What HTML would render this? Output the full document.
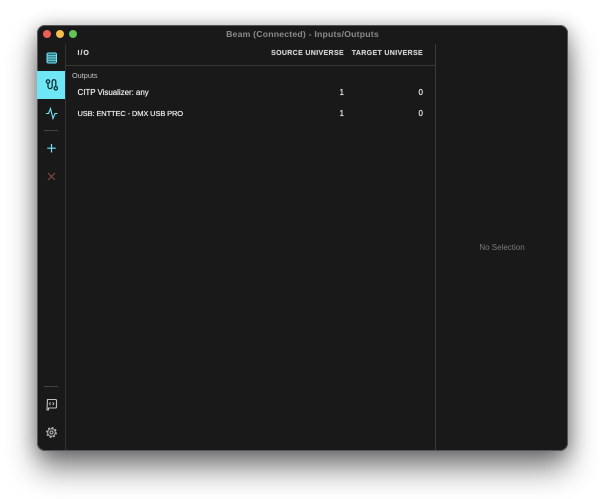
<!DOCTYPE html>
<html><head><meta charset="utf-8">
<style>
html,body{margin:0;padding:0;background:#fff;width:605px;height:499px;overflow:hidden}
*{box-sizing:border-box}
body{font-family:"Liberation Sans",sans-serif;position:relative}
#win{position:absolute;left:37px;top:25px;width:531px;height:426px;background:#191919;border-radius:8px;box-shadow:0 0 0 1px #55555a inset,0 18px 30px rgba(0,0,0,.48),0 2px 18px rgba(0,0,0,.3);}
.a{position:absolute}
.t{position:absolute;white-space:nowrap;line-height:12px;text-shadow:0 0 .5px currentColor}
.dot{position:absolute;top:5px;width:8px;height:8px;border-radius:50%}
</style></head><body>
<div id="win">
<div class="dot" style="left:6px;background:#ec5f56"></div>
<div class="dot" style="left:19px;background:#f4bd4f"></div>
<div class="dot" style="left:32px;background:#61c454"></div>
<div class="t" style="left:0;width:531px;text-align:center;top:3px;font-size:8.700px;font-weight:bold;color:#8a8a8a;letter-spacing:.2px;text-shadow:none">Beam (Connected) - Inputs/Outputs</div>

<div class="a" style="left:28px;top:19px;width:1px;height:406px;background:#333"></div>
<div class="a" style="left:398px;top:19px;width:1px;height:406px;background:#3a3a3a"></div>
<div class="a" style="left:29px;top:40px;width:369px;height:1px;background:#383838"></div>

<div class="a" style="left:0;top:46px;width:28px;height:28px;background:#6fe6f6"></div>
<div class="a" style="left:7px;top:105px;width:14px;height:1px;background:#444"></div>
<div class="a" style="left:7px;top:361px;width:14px;height:1px;background:#444"></div>

<svg class="a" style="left:0;top:0" width="29" height="426" fill="none">
<g stroke="#6fe6f6" stroke-width="1">
<rect x="10" y="28" width="9.500" height="10" rx="1.500" fill="#2f6d76"/>
<path d="M10 30.800h9.500M10 33h9.500M10 35.200h9.500"/>
</g>
<g stroke="#123338" stroke-width="1.300">
<circle cx="11" cy="56.500" r="1.700"/>
<path d="M11 58.200v3.300a2.100 2.100 0 0 0 4.200 0v-5a1.800 1.800 0 0 1 3.600 0v5.500"/>
<circle cx="18.800" cy="63.300" r="1.700"/>
</g>
<path d="M9 88.500h2.500l2-5 2.500 10 2-5h2.500" stroke="#6fe6f6" stroke-width="1.100"/>
<path d="M14.500 119v8.500M10.200 123.200h8.600" stroke="#6fe6f6" stroke-width="1.200"/>
<path d="M11 148l7 7M18 148l-7 7" stroke="#8a4a4a" stroke-width="1"/>
<path d="M10.500 374.500h8a1 1 0 0 1 1 1v6.500a1 1 0 0 1-1 1h-7v1.800h-1.500z" stroke="#c0c0c0" stroke-width="1.100"/>
<path d="M13.500 377.300l-1.100 1.400 1.100 1.400M15.700 377.300l1.100 1.400-1.100 1.400" stroke="#c0c0c0" stroke-width=".9"/>
<circle cx="14.500" cy="407.500" r="3.800" stroke="#b5b5b5" stroke-width="1"/>
<circle cx="14.500" cy="407.500" r="4.800" stroke="#b5b5b5" stroke-width="1.300" stroke-dasharray="1.900 1.870"/>
<circle cx="14.500" cy="407.500" r="1.500" stroke="#b5b5b5" stroke-width="1"/>
</svg>

<div class="t" style="left:40.500px;top:23px;font-size:7px;font-weight:bold;color:#ddd;letter-spacing:1px">I/O</div>
<div class="t" style="right:224px;top:23px;font-size:7px;font-weight:bold;color:#ccc;letter-spacing:.35px">SOURCE UNIVERSE</div>
<div class="t" style="right:145px;top:23px;font-size:7px;font-weight:bold;color:#ccc;letter-spacing:.35px">TARGET UNIVERSE</div>

<div class="t" style="left:35px;top:44.500px;font-size:7.300px;color:#c4c4c4;text-shadow:none">Outputs</div>
<div class="t" style="left:40.500px;top:62px;font-size:8px;color:#eee;letter-spacing:-.05px">CITP Visualizer: any</div>
<div class="t" style="right:224px;top:62px;font-size:8px;color:#eee">1</div>
<div class="t" style="right:145px;top:62px;font-size:8px;color:#eee">0</div>
<div class="t" style="left:40.500px;top:83px;font-size:7.500px;color:#eee;letter-spacing:-.13px">USB: ENTTEC - DMX USB PRO</div>
<div class="t" style="right:224px;top:83px;font-size:8px;color:#eee">1</div>
<div class="t" style="right:145px;top:83px;font-size:8px;color:#eee">0</div>

<div class="t" style="left:399px;width:132px;text-align:center;top:217px;font-size:8px;color:#7a7a7a;text-shadow:none">No Selection</div>
</div>
</body></html>
